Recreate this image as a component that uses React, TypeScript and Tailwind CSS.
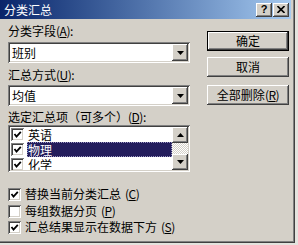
import React from 'react';

const raised =
  'bg-[#d4d0c8] shadow-[inset_-1px_-1px_0_#404040,inset_1px_1px_0_#ffffff,inset_-2px_-2px_0_#808080,inset_2px_2px_0_#d4d0c8]';
const sunken =
  'shadow-[inset_1px_1px_0_#808080,inset_-1px_-1px_0_#ffffff,inset_2px_2px_0_#404040,inset_-2px_-2px_0_#d4d0c8]';

const Key: React.FC<{ k: string }> = ({ k }) => (
  <span className="tracking-[-0.5px]">
    (<u className="underline-offset-1">{k}</u>)
  </span>
);

const Check: React.FC<{ on?: boolean }> = ({ on }) => (
  <span className={`w-[13px] h-[13px] bg-white shrink-0 flex items-center justify-center ${sunken}`}>
    {on && (
      <svg width="9" height="9" viewBox="0 0 9 9">
        <path d="M1.5 4 L3.5 6.5 L7.8 1.8" fill="none" stroke="#000" strokeWidth="1.8" />
      </svg>
    )}
  </span>
);

const Arrow: React.FC<{ up?: boolean }> = ({ up }) => (
  <svg width="7" height="4" viewBox="0 0 7 4">
    <path d={up ? 'M3.5 0 L7 4 L0 4 Z' : 'M0 0 L7 0 L3.5 4 Z'} fill="#000" />
  </svg>
);

const Combo: React.FC<{ value: string }> = ({ value }) => (
  <div className={`h-[21px] bg-white flex items-center pl-[4px] pr-[2px] ${sunken}`}>
    <span className="flex-1 text-[12px] leading-[14px]">{value}</span>
    <span className={`w-[16px] h-[17px] flex items-center justify-center ${raised}`}>
      <Arrow />
    </span>
  </div>
);

const Button: React.FC<{ children: React.ReactNode; def?: boolean; className?: string }> = ({
  children,
  def,
  className,
}) => (
  <div className={`h-[20px] ${def ? 'border border-black' : ''} ${className ?? ''}`}>
    <div className={`h-full flex items-center justify-center text-[12px] leading-[14px] ${raised}`}>{children}</div>
  </div>
);

const rows = [
  { name: '英语', on: true },
  { name: '物理', on: true, sel: true },
  { name: '化学', on: true },
];

const optRow = 'h-[16px] flex items-center gap-[4px] text-[12px] leading-[16px] whitespace-nowrap';

export default function App() {
  return (
    <div className="w-[298px] h-[245px] bg-[#e4e3de] font-['Noto_Sans_CJK_SC','Liberation_Sans',sans-serif] text-black overflow-hidden">
      <div className="w-[295px] h-[243px] bg-[#d4d0c8] flex flex-col shadow-[inset_-1px_-1px_0_#404040,inset_-2px_-2px_0_#808080]">
        {/* title bar */}
        <div className="w-[291px] h-[19px] shrink-0 flex items-center justify-between bg-gradient-to-r from-[#0a246a] to-[#a6caf0] pl-[4px] pr-[2px]">
          <span className="text-white text-[12px] leading-[14px]">分类汇总</span>
          <div className="flex gap-[1px]">
            <span className={`w-[16px] h-[14px] flex items-center justify-center ${raised}`}>
              <span className="font-['Liberation_Sans'] font-bold text-[11px] leading-[11px]">?</span>
            </span>
            <span className={`w-[16px] h-[14px] flex items-center justify-center ${raised}`}>
              <svg width="8" height="7" viewBox="0 0 8 7">
                <path d="M0.5 0 L7.5 7 M7.5 0 L0.5 7" stroke="#000" strokeWidth="1.6" />
              </svg>
            </span>
          </div>
        </div>

        <div className="flex pl-[8px]">
          {/* left column */}
          <div className="w-[182px] flex flex-col">
            <div className="mt-[5px] text-[12px] leading-[14px]">
              分类字段<Key k="A" />:
            </div>
            <div className="mt-[4px]">
              <Combo value="班别" />
            </div>
            <div className="mt-[5px] text-[12px] leading-[14px]">
              汇总方式<Key k="U" />:
            </div>
            <div className="mt-[3px]">
              <Combo value="均值" />
            </div>
            <div className="mt-[4px] text-[12px] leading-[14px] whitespace-nowrap">
              选定汇总项（可多个）<Key k="D" />:
            </div>
            <div className={`mt-[1px] h-[47px] bg-white p-[2px] flex overflow-hidden ${sunken}`}>
              <div className="flex-1 flex flex-col overflow-hidden">
                {rows.map((r) => (
                  <div key={r.name} className="h-[15px] shrink-0 flex items-center pl-[1px]">
                    <Check on={r.on} />
                    <span
                      className={`ml-[3px] flex-1 h-[15px] pl-[1px] text-[12px] leading-[15px] ${
                        r.sel ? 'bg-[#231d5c] text-white outline-1 outline-dotted outline-[#9a96c0] -outline-offset-1' : ''
                      }`}
                    >
                      {r.name}
                    </span>
                  </div>
                ))}
              </div>
              <div className="w-[16px] flex flex-col">
                <span className={`h-[16px] flex items-center justify-center ${raised}`}>
                  <Arrow up />
                </span>
                <span className="flex-1 bg-[repeating-conic-gradient(#ffffff_0_25%,#d4d0c8_0_50%)] bg-[length:2px_2px]" />
                <span className={`h-[16px] flex items-center justify-center ${raised}`}>
                  <Arrow />
                </span>
              </div>
            </div>

            <div className={`mt-[14px] ${optRow}`}>
              <Check on />
              替换当前分类汇总<Key k="C" />
            </div>
            <div className={`mt-[1px] ${optRow}`}>
              <Check />
              每组数据分页<Key k="P" />
            </div>
            <div className={optRow}>
              <Check on />
              汇总结果显示在数据下方<Key k="S" />
            </div>
          </div>

          {/* right column */}
          <div className="ml-[17px] w-[82px] flex flex-col pt-[12px]">
            <Button def>确定</Button>
            <Button className="mt-[6px]">取消</Button>
            <Button className="mt-[8px]">
              全部删除<Key k="R" />
            </Button>
          </div>
        </div>
      </div>
    </div>
  );
}
